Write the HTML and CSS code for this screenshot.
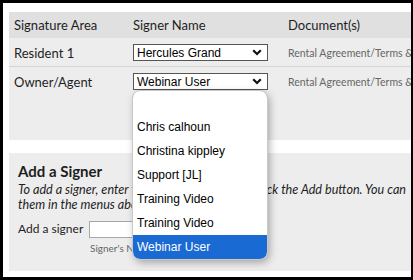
FILE: index.html
```html
<!DOCTYPE html>
<html>
<head>
<meta charset="utf-8">
<link rel="stylesheet" href="styles.css">
</head>
<body>
<div class="frame">
  <div class="page">
    <div class="table">
      <div class="row head">
        <div class="c1">Signature Area</div>
        <div class="c2">Signer Name</div>
        <div class="c3">Document(s)</div>
      </div>
      <div class="row r1">
        <div class="c1">Resident 1</div>
        <div class="c2"><div class="sel"><span>Hercules Grand</span><svg class="chev" width="10" height="7" viewBox="0 0 10 7"><path d="M1.2 1.2 L5 5 L8.8 1.2" fill="none" stroke="#111" stroke-width="2.2"/></svg></div></div>
        <div class="c3 doc">Rental Agreement/Terms &amp;</div>
      </div>
      <div class="row r2">
        <div class="c1">Owner/Agent</div>
        <div class="c2"><div class="sel"><span>Webinar User</span><svg class="chev" width="10" height="7" viewBox="0 0 10 7"><path d="M1.2 1.2 L5 5 L8.8 1.2" fill="none" stroke="#111" stroke-width="2.2"/></svg></div></div>
        <div class="c3 doc">Rental Agreement/Terms &amp;</div>
      </div>
    </div>
    <div class="add">
      <div class="add-title">Add a Signer</div>
      <div class="add-help">To add a signer, enter the name &amp; email, then click the Add button. You can<br>them in the menus above.</div>
      <div class="add-form">
        <label class="add-label">Add a signer</label>
        <div class="field">
          <div class="input"></div>
          <div class="hint">Signer's Name</div>
        </div>
      </div>
    </div>
    <ul class="dropdown">
      <li class="opt"></li>
      <li class="opt">Chris calhoun</li>
      <li class="opt">Christina kippley</li>
      <li class="opt">Support [JL]</li>
      <li class="opt">Training Video</li>
      <li class="opt">Training Video</li>
      <li class="opt selected">Webinar User</li>
    </ul>
  </div>
</div>
</body>
</html>
```
FILE: styles.css
```css
html, body {
  margin: 0;
  padding: 0;
  background: #000;
}
.frame {
  width: 413px;
  height: 280px;
  box-sizing: border-box;
  border-style: solid;
  border-color: #000;
  border-width: 3px 2px 3px 3px;
  background: #fff;
  overflow: hidden;
}
.page {
  position: relative;
  padding: 9px 0 0 6px;
  height: 100%;
  box-sizing: border-box;
  font-family: "Lato", "Open Sans", sans-serif;
  font-size: 13px;
  color: #1e1e1e;
  white-space: nowrap;
}
.table {
  width: 402px;
  background: #ededed;
  height: 128px;
}
.row {
  display: grid;
  grid-template-columns: 119px 155px 1fr;
}
.row > div {
  padding-left: 5px;
  overflow: hidden;
}
.head {
  height: 26px;
  align-items: center;
  background: #e0e0e0;
}
.r1 {
  height: 28px;
  border-bottom: 1px solid #d6d6d6;
  align-items: start;
}
.r1 .c1, .r1 .c3 { padding-top: 7px; }
.r1 .c2 { padding-top: 6px; }
.r2 .c1, .r2 .c3 { padding-top: 7px; }
.r2 .c2 { padding-top: 6px; }
.doc {
  font-size: 10.5px;
  color: #666;
  padding-top: 9px !important;
}
.sel {
  width: 135px;
  height: 17px;
  box-sizing: border-box;
  border: 1px solid #555;
  background: #fff;
  display: flex;
  align-items: center;
  justify-content: space-between;
  padding: 0 5px 0 3px;
  font-family: "Liberation Sans", Arial, sans-serif;
  font-size: 12px;
  color: #000;
}
.chev { display: block; }
.add {
  margin-top: 13px;
  width: 402px;
  height: 118px;
  background: #ededed;
  padding: 10px 0 0 9px;
  box-sizing: border-box;
  overflow: hidden;
}
.add-title {
  font-weight: bold;
  font-size: 15px;
  line-height: 16px;
}
.add-help {
  font-style: italic;
  font-size: 12.6px;
  line-height: 15px;
  margin-top: 3px;
}
.add-form {
  display: flex;
  align-items: flex-start;
  margin-top: 9px;
}
.add-label {
  font-size: 12px;
  line-height: 16px;
  width: 71px;
}
.field {
  display: flex;
  flex-direction: column;
}
.input {
  width: 179px;
  height: 17px;
  box-sizing: border-box;
  border: 1px solid #a8a8a8;
  background: #fff;
}
.hint {
  font-size: 10px;
  color: #666;
  padding-left: 1px;
  margin-top: 4px;
}
.dropdown {
  position: absolute;
  left: 130px;
  top: 88px;
  width: 134px;
  margin: 0;
  padding: 0;
  list-style: none;
  background: #fff;
  border-radius: 7px;
  overflow: hidden;
  box-shadow: 2px 3px 8px rgba(0,0,0,0.35);
  outline: 1px solid #c8c8c8;
  font-family: "Liberation Sans", Arial, sans-serif;
  font-size: 12px;
  color: #000;
}
.opt {
  height: 24px;
  line-height: 24px;
  padding-left: 4px;
}
.opt.selected {
  background: #1a6ad4;
  color: #fff;
}
```
